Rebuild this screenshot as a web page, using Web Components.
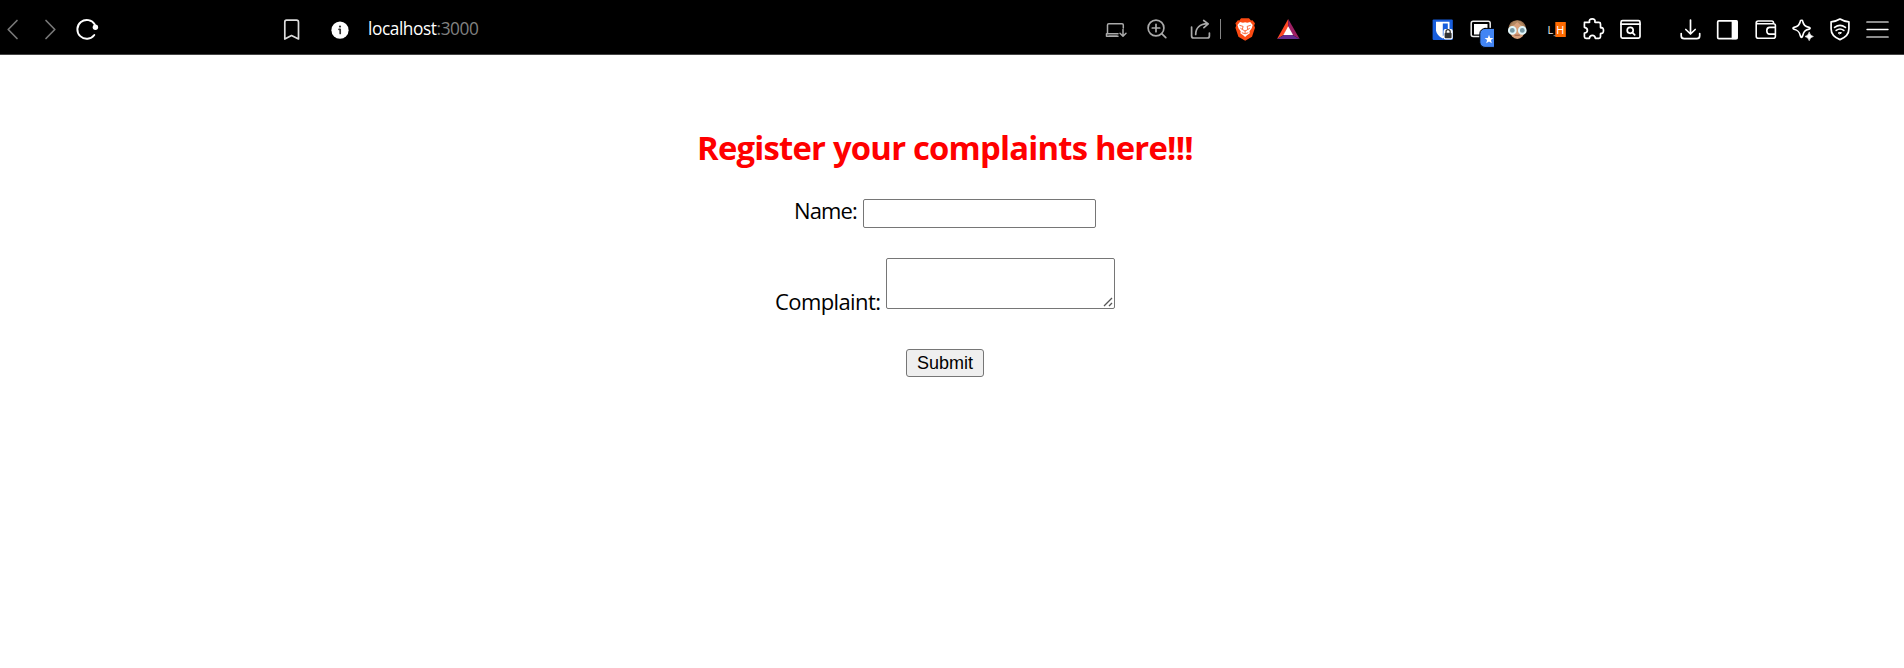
<!DOCTYPE html>
<html lang="en"><head><meta charset="utf-8"><title>localhost:3000</title>
<style>body{margin:0;background:#fff;font-family:"Open Sans","Noto Sans",sans-serif}</style></head>
<body>
<browser-toolbar></browser-toolbar>
<complaint-form>
<span slot="title">Register your complaints here!!!</span>
</complaint-form>
<script>
const icons={
back:[0,'<path d="M17 20.5 8.2 29.5 17 38.5" stroke="#777"/>'],
forward:[37,'<path d="M46 20.5 54.8 29.5 46 38.5" stroke="#777"/>'],
reload:[73,'<path d="M94.300 35A9.4 9.4 0 1 1 94.800 24.500" stroke-width="1.900"/><circle cx="95.4" cy="27.3" r="2.7" fill="#fff" stroke="none"/>'],
bookmark:[277,'<path d="M286.5 20.2h10q2 0 2 2V39L291.5 35.5 284.8 39V22.2q0-2 1.7-2Z" stroke="#ddd"/>'],
info:[326,'<circle cx="340" cy="30.2" r="8.6" fill="#fff" stroke="none"/><path d="M339 29.3h1.200v4.200" stroke="#333" stroke-width="1.700"/><circle cx="340" cy="26.6" r="1.1" fill="#333" stroke="none"/>'],
device:[1102,'<path d="M1123.3 28v-3q0-1.3-1.3-1.3h-13.2q-1.3 0-1.3 1.3V33M1106.5 33.7h11.5M1106.5 33.7v2.6h11.5M1109 36h8M1123 29.5v6.5M1120 33.2l3 3 3-3" stroke="#aaa" stroke-width="1.5"/>'],
zoom:[1143,'<circle cx="1156" cy="28" r="7.9"/><path d="m1161.7 33.6 4.1 4M1152.300 28h7.4M1156 24.3v7.4"/>','#aaa'],
share:[1184,'<path d="M1191.6 27v9q0 2 2 2h13.8q2 0 2-2v-3M1195.7 34.5c0-6 3.8-10.5 12-10.8M1203.7 20.5l4.5 3.4-4.3 3.8"/>','#aaa'],
brave:[1231,'<path d="m1241 18.2 8 0 2 2.2 1.5-.2 2.5 3-.8 2.2.8 2.4-3 9-6.8 4-6.8-4-3-9 .8-2.4-.8-2.2 2.5-3 1.5.2Z" fill="#fb4a12" stroke="none"/><path d="m1240 22 3 .8 2.1-.6 2.1.6 3-.8 2.5 3.1-1 3.2-2.2 3 .3 2-3.1 2.1-1.6 1.5-1.6-1.5-3.1-2.1.3-2-2.2-3-1-3.2Z" fill="#fff" stroke="none"/><path d="m1239.8 25.4 3.3 1-.7 2.8 1.8 1.5.9 0 .9 0 1.8-1.5-.7-2.8 3.3-1M1240.7 28.4l1.7 1.2M1249.5 28.4l-1.7 1.2M1242.2 32.8l2.9 1 2.9-1M1245.1 31v2" stroke="#fb4a12" stroke-width=".8"/>'],
rewards:[1274,'<g stroke="none"><path d="M1288.2 19v8.2L1283.7 35 1277 39Z" fill="#ff4724"/><path d="M1288.2 19 1299.7 39 1292.6 35 1288.2 27.2Z" fill="#9e1f63"/><path d="m1277 39 6.8-4h8.8l7.1 4Z" fill="#662d91"/><path d="M1288.2 26.2 1293.1 35h-9.800Z" fill="#fff"/></g>'],
vault:[1429,'<g stroke="none"><rect x="1432.6" y="19.4" width="20.2" height="20.6" rx="1" fill="#175ddc"/><path d="M1436 21.8h13.5v9q-1 5-6.7 7.7-5.8-2.8-6.8-7.7Z" fill="#fff"/><path d="M1442.8 23.4h5v7.2q-.8 3.2-5 5.6Z" fill="#175ddc"/><rect x="1443.5" y="29" width="9.3" height="10.6" rx="2" fill="#fff"/><rect x="1444.6" y="32.7" width="7" height="5.6" rx="1" fill="#333"/></g><path d="M1446 33v-1.2a2.1 2.1 0 0 1 4.2 0V33" stroke="#333" stroke-width="1.3"/>'],
tabs:[1466,'<rect x="1471.2" y="21.2" width="19" height="15.4" rx="2" stroke="#eee" stroke-width="1.5"/><rect x="1474" y="24" width="13.5" height="10.500" fill="#fff" stroke="none"/><rect x="1479.8" y="28.4" width="18.6" height="19" rx="5.2" fill="#4285f4" stroke="#000" stroke-width="1"/><path d="m1489 34.8 1.2 3.1 3.2.1-2.5 2 .9 3.2-2.8-1.8-2.8 1.8.9-3.2-2.5-2 3.2-.1Z" fill="#fff" stroke="none"/>'],
face:[1503,'<g stroke="none"><path d="M1508.5 32q-1-11.5 8.7-11.8 9.8.3 8.8 12-8 4-17.5-.2" fill="#98704f"/><ellipse cx="1517.3" cy="30.5" rx="7.3" ry="8.5" fill="#d9a17c"/><path d="M1510 27q2-6 7.3-6.5 5 .5 7 6.5-4-1-7-5-3 4-7.3 5" fill="#b28862"/></g><g fill="#7798a3" stroke="#e2f7fb" stroke-width="1.9"><circle cx="1512.3" cy="30.4" r="3.4"/><circle cx="1522.3" cy="30.4" r="3.4"/></g><path d="M1515 35.2h4.4" stroke="#945947" stroke-width="1"/>'],
lh:[1542,'<rect x="1555.3" y="22" width="10.5" height="15" fill="#ff6a00" stroke="none"/><text x="1547.400" y="33.800" font-size="11" fill="#eee" stroke="none">L</text><text x="1556.3" y="33.800" font-size="11" fill="#fff" stroke="none">H</text><path d="M1554 35.7h1.5" stroke="#888" stroke-width="1"/>'],
puzzle:[1579,'<path d="M1584.4 22.3h4.8c.4 0 .5-.3.3-.7-.6-1.7.8-2.7 2.7-2.7s3.3 1 2.7 2.7c-.1.4 0 .7.4.7h3.6q1.6 0 1.6 1.6v3.4c0 .4.4.6.7.4 1.5-.4 2.3 1.1 2.3 2.9s-.8 3.2-2.3 2.8c-.4-.1-.7 0-.7.4v3q0 1.6-1.6 1.6h-3.5c-.3-2-1.5-3-3-3s-2.8 1-3 3h-3.4q-1.6 0-1.6-1.6v-3.6c2-.3 3-1.5 3-2.9s-1-2.7-3-3V23.7q0-1.4 1-1.4Z" stroke-width="1.7"/>'],
find:[1616,'<rect x="1621" y="20.7" width="19" height="17.4" rx="1.5"/><path d="M1621 24.2h19"/><circle cx="1630.2" cy="30.3" r="3" stroke-width="1.7"/><path d="m1632.4 32.6 2.3 2.3"/>'],
download:[1676,'<path d="M1690.5 20v13.5M1685.8 29.5l4.7 4.5 4.7-4.5M1681.2 33.5v2.2q0 3 3 3h12.5q3 0 3-3v-2.2"/>'],
sidebar:[1713,'<rect x="1717.7" y="20.9" width="19.4" height="17.8" rx="1.2"/><path d="M1732.500 21h4.200v17.5h-4.200Z" fill="#fff"/>'],
wallet:[1751,'<path d="M1773.5 23.7v-1q0-1.7-1.8-1.7h-13.5q-2 0-2 1.7v13.5q0 2 2 2h15.2q2 0 2-2V25.6q0-1.8-2-1.8h-15.2q-2 0-2-1.2M1775.4 27.4h-5.8q-2.8 0-2.8 3.3t2.8 3.4h5.8" stroke-width="1.6"/>'],
spark:[1788,'<path d="M1801.5 20q1 0 1.2 1.2c1 4 2.2 5.3 6.3 6.2q2.2.9 0 1.8c-4.1 1-5.3 2.4-6.3 6.4q-1.2 3.4-2.4 0c-1-4-2.2-5.4-6.2-6.4q-2.2-.9 0-1.8c4-.9 5.2-2.2 6.2-6.2q.2-1.2 1.2-1.2Z"/><path d="M1809.2 32.3q.8 3.5 4.2 4.2-3.4.7-4.2 4.2-.8-3.5-4.2-4.2 3.4-.7 4.2-4.2Z" fill="#fff" stroke="#fff" stroke-width=".6"/>'],
vpn:[1826,'<path d="M1840 19q4 2.5 8.9 2.8v7c0 5.4-4 9-8.9 10.8-4.9-1.8-8.9-5.4-8.9-10.8v-7q4.900-.3 8.900-2.800Z" stroke-width="1.7"/><path d="M1834.600 27.400q5.400-4 10.800 0M1836.200 30.400q3.800-2.800 7.600 0"/><path d="M1838.500 32.800q1.500-.8 3 0l-1.500 1Z" fill="#fff" stroke-width="1"/>'],
menu:[1863,'<path d="M1867 22h21M1867 37h21" stroke="#bbb"/><path d="M1867 29.500h21" stroke-width="1.400"/>']
};
class ToolIcon extends HTMLElement{
 constructor(){super();this.attachShadow({mode:'open'})}
 connectedCallback(){
  const [x,art,color='#fff']=icons[this.getAttribute('name')];
  this.shadowRoot.innerHTML=`<style>:host{display:block;flex:none;width:28px;height:34px}svg{display:block;font-family:"Open Sans",sans-serif}</style>
  <svg width="28" height="34" viewBox="${x} 15 28 34" fill="none" stroke="${color}" stroke-width="1.700" stroke-linecap="round" stroke-linejoin="round">${art}</svg>`;
 }
}
customElements.define('tool-icon',ToolIcon);

class AddressText extends HTMLElement{
 constructor(){super();this.attachShadow({mode:'open'}).innerHTML=`<style>:host{display:block;width:120px;color:#fff;font:17.300px/28px "Open Sans",sans-serif;letter-spacing:-.43px;white-space:nowrap}.port{color:#808080}</style><span>localhost</span><span class="port">:3000</span>`}
}
customElements.define('address-text',AddressText);

class BrowserToolbar extends HTMLElement{
 constructor(){super();
  const i=(name,gap=0)=>`<tool-icon name="${name}" style="margin-left:${gap}px"></tool-icon>`;
  this.attachShadow({mode:'open'}).innerHTML=`<style>
  :host{display:flex;box-sizing:border-box;height:55px;padding-top:15px;background:#000;border-bottom:1px solid #444;align-items:flex-start}
  .group{display:flex;flex:none}
  .page{margin-left:176px}.actions{margin-left:614px}.extensions{margin-left:127px}.tools{margin-left:32px}
  address-text{margin-left:14px}
  .sep{width:1px;height:20px;margin:4px 10px 0 8px;background:#858585}
  </style>
  <div class="group">${i('back')}${i('forward',9)}${i('reload',8)}</div>
  <div class="group page">${i('bookmark')}${i('info',21)}<address-text></address-text></div>
  <div class="group actions">${i('device')}${i('zoom',13)}${i('share',13)}<div class="sep"></div>${i('brave')}${i('rewards',15)}</div>
  <div class="group extensions">${i('vault')}${i('tabs',9)}${i('face',9)}${i('lh',11)}${i('puzzle',9)}${i('find',9)}</div>
  <div class="group tools">${i('download')}${i('sidebar',9)}${i('wallet',10)}${i('spark',9)}${i('vpn',10)}${i('menu',9)}</div>`}
}
customElements.define('browser-toolbar',BrowserToolbar);

class FormField extends HTMLElement{
 constructor(){super();this.attachShadow({mode:'open'}).innerHTML=`<style>
 :host{display:flex;justify-content:center;gap:6px;align-items:flex-start}
 label{display:block;flex:none;width:var(--label-width);padding-top:var(--label-top,0);letter-spacing:var(--tracking);font-size:22px;line-height:var(--label-line,24px);white-space:nowrap;color:#000}
 ::slotted(*){flex:none}
 </style><label></label><slot></slot>`}
 connectedCallback(){this.shadowRoot.querySelector('label').textContent=this.getAttribute('label')}
}
customElements.define('form-field',FormField);

class ComplaintForm extends HTMLElement{
 constructor(){super();this.attachShadow({mode:'open'}).innerHTML=`<style>
 :host{display:block;width:1890px;padding-top:69px}
 h1{margin:0;height:48px;font-size:32.800px;line-height:48px;font-weight:700;letter-spacing:-.78px;color:red;text-align:center;white-space:nowrap}
 form{display:flex;flex-direction:column;align-items:center}
 input,textarea,button{box-sizing:border-box;margin:0;display:block}
 input{width:233px;height:29px;border:1px solid #767676;border-radius:2px;background:#fff}
 .area{position:relative;width:229px;height:51px}
 textarea{width:229px;height:51px;border:1px solid #767676;border-radius:2px;background:#fff;resize:none}
 .grip{position:absolute;right:2px;bottom:2px}
 .name{margin-top:27px;--label-width:63px;--label-line:22px;--tracking:-.9px}
 .complaint{margin-top:30px;--label-width:105px;--label-top:31px;--tracking:-.6px}
 button{margin-top:36px;width:78px;height:28px;border:1px solid #767676;border-radius:3px;background:#efefef;color:#000;font:18px "Liberation Sans",Arial,sans-serif;padding:0}
 </style><h1><slot name="title"></slot></h1>
 <form><form-field class="name" label="Name:"><input type="text"></form-field>
 <form-field class="complaint" label="Complaint:"><div class="area"><textarea></textarea><svg class="grip" width="10" height="10" fill="none" stroke="#555" stroke-width="1.300"><path d="M1 9 9 1M6 9 9 6"/></svg></div></form-field>
 <button type="submit">Submit</button></form>`}
}
customElements.define('complaint-form',ComplaintForm);
</script>
</body></html>
